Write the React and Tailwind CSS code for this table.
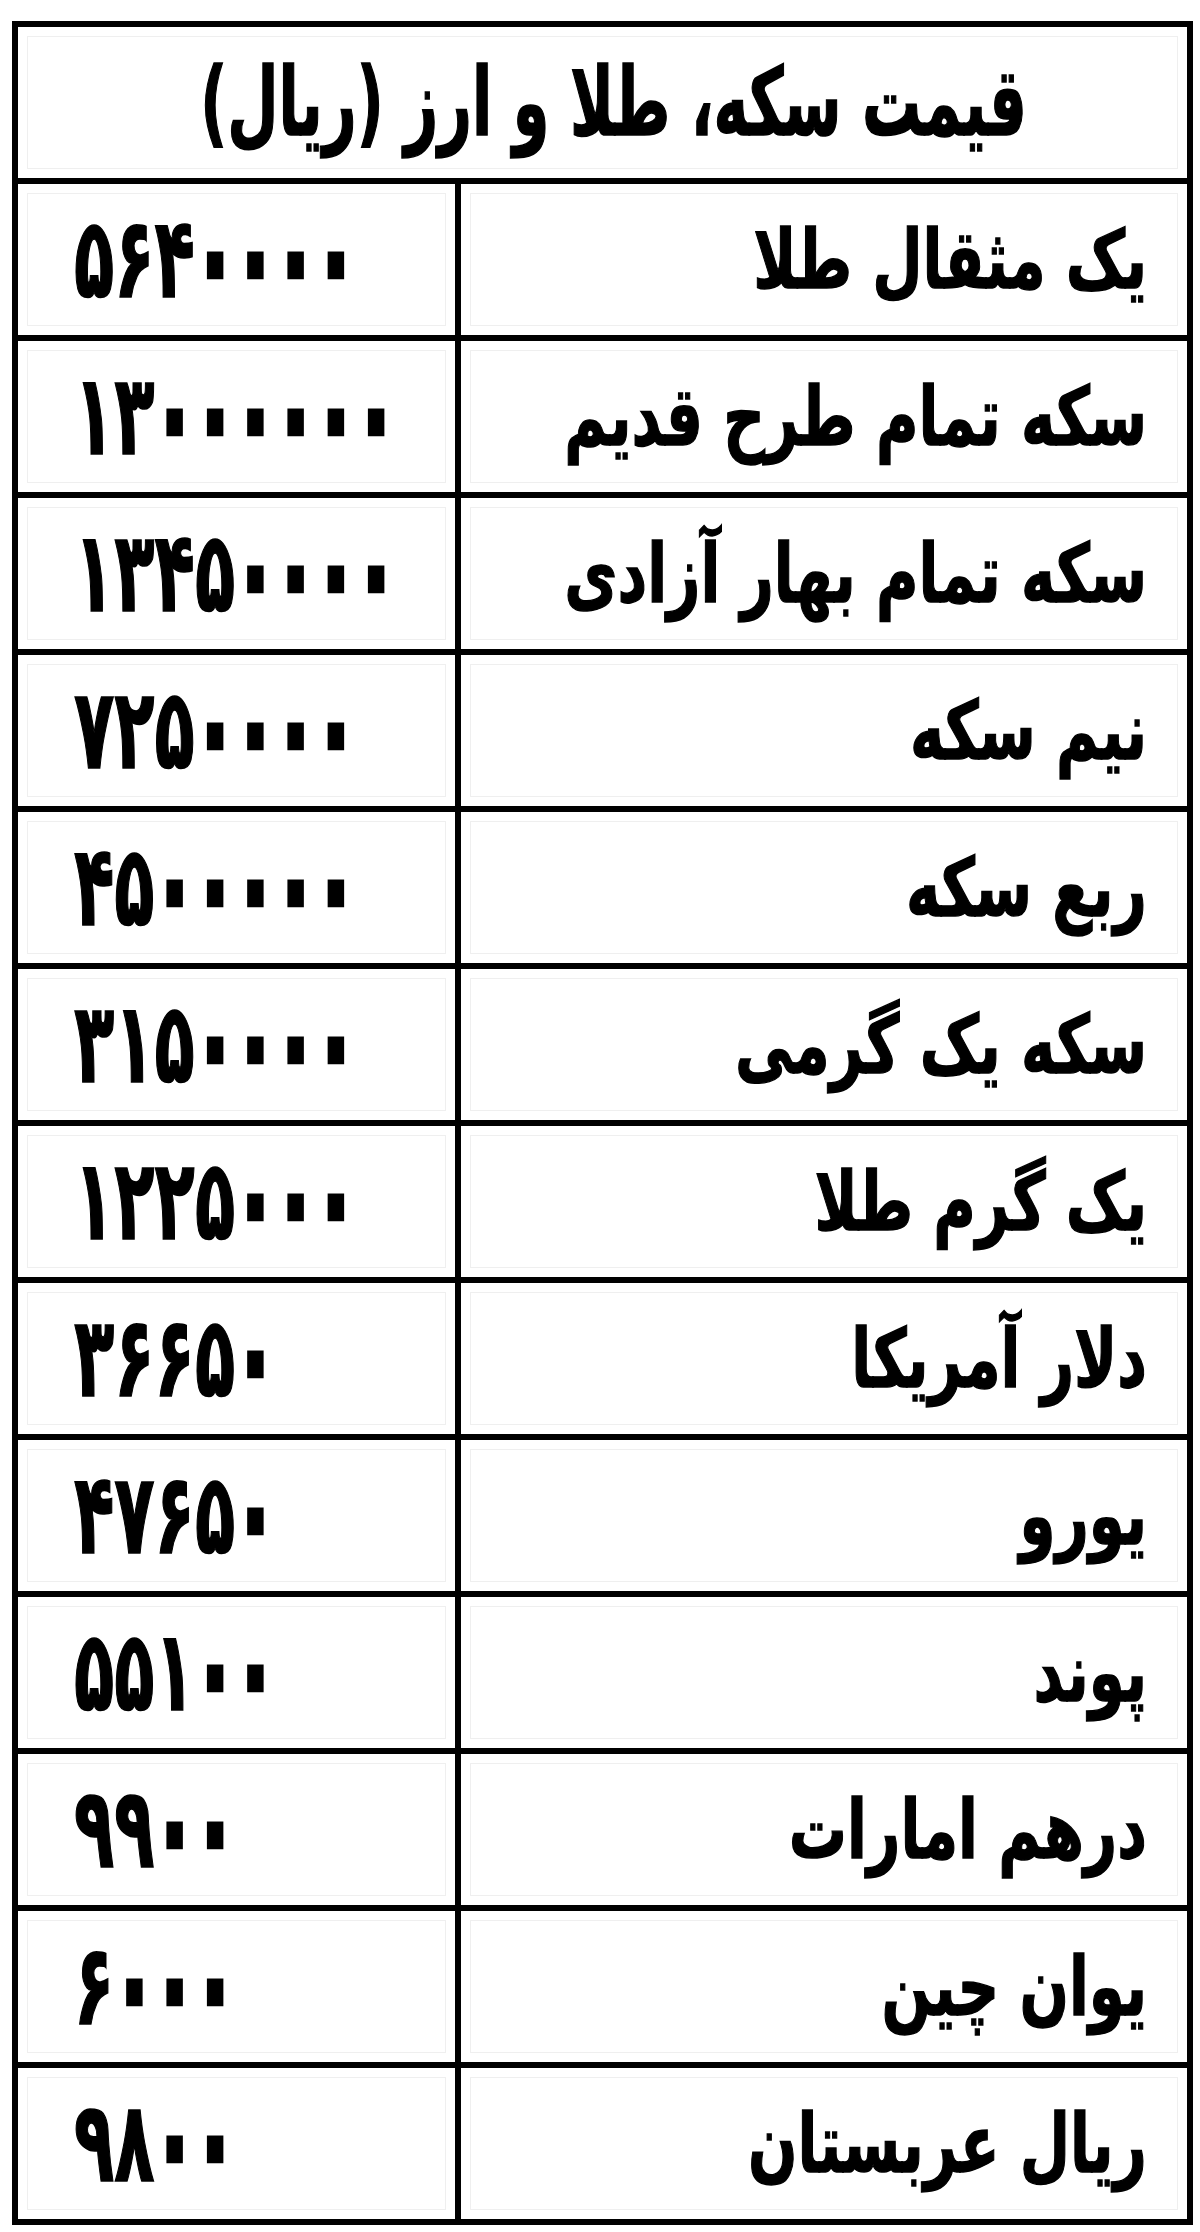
import React from "react";

const prices = [
  { name: "یک مثقال طلا", price: "۵۶۴۰۰۰۰" },
  { name: "سکه تمام طرح قدیم", price: "۱۳۰۰۰۰۰۰" },
  { name: "سکه تمام بهار آزادی", price: "۱۳۴۵۰۰۰۰" },
  { name: "نیم سکه", price: "۷۲۵۰۰۰۰" },
  { name: "ربع سکه", price: "۴۵۰۰۰۰۰" },
  { name: "سکه یک گرمی", price: "۳۱۵۰۰۰۰" },
  { name: "یک گرم طلا", price: "۱۲۲۵۰۰۰" },
  { name: "دلار آمریکا", price: "۳۶۶۵۰" },
  { name: "یورو", price: "۴۷۶۵۰" },
  { name: "پوند", price: "۵۵۱۰۰" },
  { name: "درهم امارات", price: "۹۹۰۰" },
  { name: "یوان چین", price: "۶۰۰۰" },
  { name: "ریال عربستان", price: "۹۸۰۰" },
];

const font = "font-['DejaVu_Sans',sans-serif] font-bold text-black [-webkit-text-stroke:1px_black]";

// the zeros in the print are chunky diamonds, so give them a heavier stroke
const Price = ({ value }) => (
  <span className="inline-block scale-y-[1.7]">
    {value.split("").map((ch, i) =>
      ch === "۰" ? (
        <span key={i} className="[-webkit-text-stroke:5px_black]">
          {ch}
        </span>
      ) : (
        <span key={i}>{ch}</span>
      )
    )}
  </span>
);

export default function App() {
  return (
    <div className={`min-h-screen bg-white pt-[21px] pl-[12px] ${font}`}>
      <div className="w-[1181px] border-[6px] border-black">
        <div className="h-[157px] border-b-[6px] border-black p-[9px]">
          <div
            dir="rtl"
            className="flex h-full items-center justify-center border border-[#efefef] pl-[22px] text-[59px] leading-none"
          >
            <span className="inline-block scale-y-[1.6]">قیمت سکه، طلا و ارز (ریال)</span>
          </div>
        </div>

        {prices.map((row, i) => (
          <div
            key={row.name}
            className={`flex border-black ${i === prices.length - 1 ? "h-[151px]" : "h-[157px] border-b-[6px]"}`}
          >
            <div className="w-[443px] shrink-0 border-r-[6px] border-black p-[9px]">
              <div dir="ltr" className="flex h-full items-center border border-[#efefef] pl-[46px] text-[66px] leading-none">
                <Price value={row.price} />
              </div>
            </div>
            <div className="flex-1 p-[9px]">
              <div dir="rtl" className="flex h-full items-center border border-[#efefef] pr-[30px] text-[58px] leading-none">
                <span className="inline-block scale-y-[1.4]">{row.name}</span>
              </div>
            </div>
          </div>
        ))}
      </div>
    </div>
  );
}
